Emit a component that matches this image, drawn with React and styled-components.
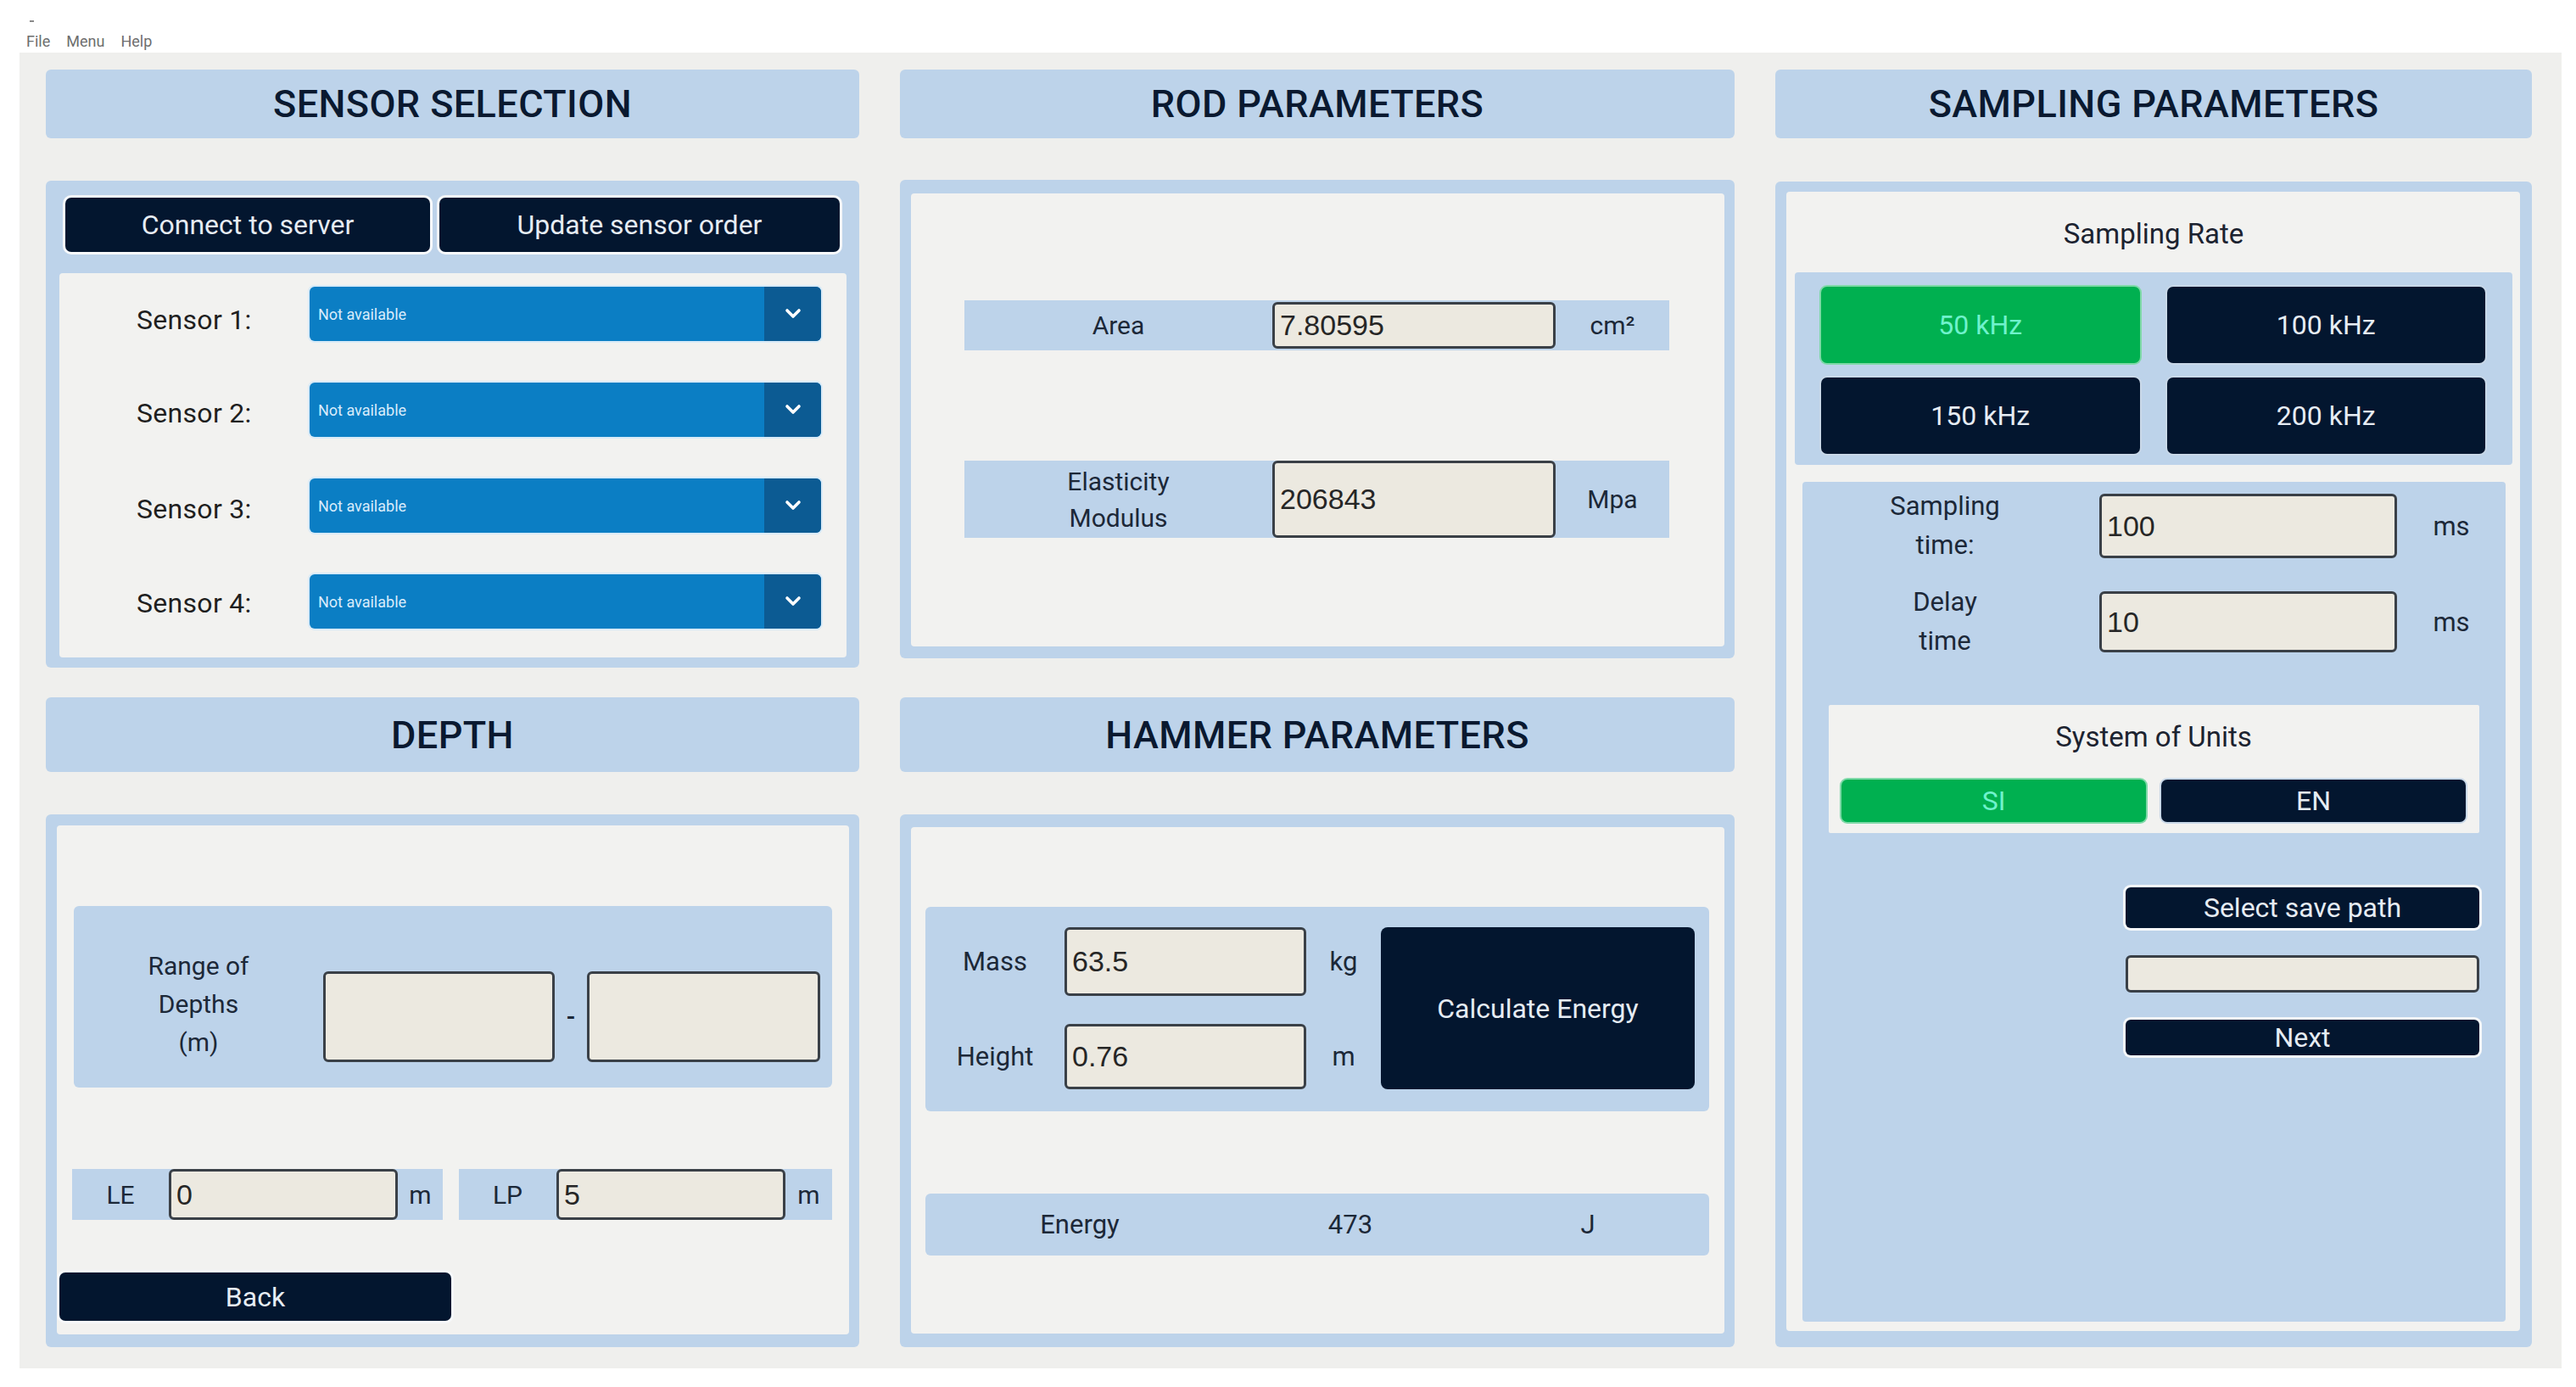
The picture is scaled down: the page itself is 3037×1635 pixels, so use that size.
import React from "react";
import styled, { createGlobalStyle } from "styled-components";

const GlobalStyle = createGlobalStyle`
  *, *::before, *::after { box-sizing: border-box; }
  html, body { margin: 0; padding: 0; background: #ffffff; }
  body { font-family: Roboto, "Liberation Sans", Arial, sans-serif; color: #1c2838; }
`;

const BLUE = "#bdd3ea";
const LIGHT = "#f2f2f0";
const NAVY = "#03162f";

const Page = styled.div`
  width: 3037px;
  height: 1635px;
  background: #ffffff;
`;

const MenuBar = styled.div`
  position: relative;
  height: 62px;
  display: flex;
  align-items: center;
  gap: 19px;
  padding: 34px 0 0 31px;
  font-size: 18px;
  color: #6e6e6e;
  &::before {
    content: "";
    position: absolute;
    left: 35px;
    top: 24px;
    width: 5px;
    height: 2px;
    background: #8a8a8a;
  }
`;

const Frame = styled.div`
  margin: 0 17px 0 23px;
  height: 1551px;
  background: #efefed;
  padding: 20px 34px 25px 31px;
  display: grid;
  grid-template-columns: 959px 984px 892px;
  column-gap: 48px;
`;

const Column = styled.div`
  display: flex;
  flex-direction: column;
  justify-content: space-between;
`;

const Section = styled.section`
  height: ${(p) => p.$h}px;
  display: flex;
  flex-direction: column;
  gap: ${(p) => p.$gap || 50}px;
`;

const Header = styled.div`
  height: ${(p) => p.$h || 81}px;
  flex: none;
  background: ${BLUE};
  border-radius: 6px;
  display: flex;
  align-items: center;
  justify-content: center;
  font-size: 45px;
  font-weight: 500;
  letter-spacing: 0.4px;
  color: #0a1930;
`;

const Panel = styled.div`
  flex: 1;
  background: ${BLUE};
  border-radius: 6px;
  padding: ${(p) => p.$pad};
  display: flex;
  flex-direction: column;
`;

const InnerBox = styled.div`
  flex: 1;
  background: ${LIGHT};
  border-radius: 4px;
  padding: ${(p) => p.$pad || "0"};
  display: flex;
  flex-direction: column;
  gap: ${(p) => p.$gap || 0}px;
`;

const DarkButton = styled.button`
  border: none;
  background: ${NAVY};
  color: #e6ecf3;
  border-radius: ${(p) => p.$r || 7}px;
  font-family: Roboto, "Liberation Sans", Arial, sans-serif;
  font-size: ${(p) => p.$fs || 32}px;
  height: ${(p) => (p.$h ? `${p.$h}px` : "auto")};
  padding: 0;
  box-shadow: 0 0 0 3px #f7f9fb;
  cursor: pointer;
`;

const ButtonRow = styled.div`
  display: grid;
  grid-template-columns: 430fr 472fr;
  gap: 11px;
  height: 64px;
  padding: 0 8px 0 7px;
  margin-bottom: 25px;
`;

const SensorRow = styled.div`
  display: grid;
  grid-template-columns: 295px 1fr;
  align-items: center;
  height: 64px;
`;

const SensorLabel = styled.span`
  padding: ${(p) => p.$dy || 0}px 0 0 91px;
  font-size: 32px;
  letter-spacing: 0.3px;
  color: #1f1f1f;
`;

const Dropdown = styled.div`
  height: 64px;
  display: flex;
  background: #0b7ec4;
  border-radius: 6px;
  overflow: hidden;
  box-shadow: 0 0 0 2px #d8eaf7;
`;

const DropText = styled.span`
  flex: 1;
  display: flex;
  align-items: center;
  padding-left: 10px;
  font-size: 18px;
  color: #d9ecfb;
`;

const DropArrow = styled.span`
  width: 67px;
  background: #0c5b93;
  display: flex;
  align-items: center;
  justify-content: center;
`;

const Field = styled.input`
  width: 100%;
  height: ${(p) => p.$h}px;
  background: #ece9e0;
  border: 3px solid #3a4047;
  border-radius: 6px;
  padding: 0 0 0 6px;
  font-family: "Liberation Sans", Arial, sans-serif;
  font-size: 34px;
  color: #262626;
  outline: none;
`;

const RangeBox = styled.div`
  height: 214px;
  margin-left: 2px;
  background: ${BLUE};
  border-radius: 6px;
  display: grid;
  grid-template-columns: 294px 273px 38px 275px;
  align-items: center;
  padding: 46px 15px 0 0;
`;

const RangeLabel = styled.div`
  text-align: center;
  font-size: 30px;
  line-height: 45px;
  margin-top: -30px;
`;

const Dash = styled.span`
  text-align: center;
  font-size: 28px;
  font-weight: 700;
`;

const LimitRow = styled.div`
  margin-top: 96px;
  display: grid;
  grid-template-columns: 437px 440px;
  gap: 19px;
  height: 60px;
`;

const LimitBox = styled.div`
  background: ${BLUE};
  display: grid;
  grid-template-columns: ${(p) => p.$lw}px 270px 1fr;
  align-items: center;
  font-size: 30px;
`;

const Center = styled.span`
  text-align: center;
`;

const BackButton = styled(DarkButton)`
  align-self: flex-start;
  margin: 62px 0 0 -15px;
  width: 462px;
`;

const ParamRow = styled.div`
  margin-top: ${(p) => p.$mt || 0}px;
  height: ${(p) => p.$h}px;
  background: ${BLUE};
  display: grid;
  grid-template-columns: 363px 334px 1fr;
  align-items: center;
  font-size: 30px;
`;

const ParamLabel = styled.span`
  text-align: center;
  line-height: 43px;
`;

const MassBox = styled.div`
  height: 241px;
  background: ${BLUE};
  border-radius: 6px;
  display: flex;
  padding: 24px 17px 26px 0;
`;

const MassGrid = styled.div`
  display: grid;
  grid-template-columns: 164px 285px 88px;
  grid-template-rows: 81px 77px;
  row-gap: 33px;
  align-items: center;
  font-size: 31px;
`;

const BigButton = styled(DarkButton)`
  flex: 1;
  height: 191px;
  box-shadow: none;
  border-radius: 8px;
`;

const EnergyRow = styled.div`
  margin-top: 97px;
  height: 73px;
  background: ${BLUE};
  border-radius: 6px;
  display: grid;
  grid-template-columns: 364px 274px 1fr;
  align-items: center;
  text-align: center;
  font-size: 31px;
`;

const BoxTitle = styled.div`
  height: ${(p) => p.$h}px;
  padding-top: ${(p) => p.$pt}px;
  text-align: center;
  font-size: 33px;
  line-height: 36px;
  color: #1c2330;
`;

const RateBox = styled.div`
  background: ${BLUE};
  border-radius: 4px;
  padding: 17px 32px 13px 31px;
  display: grid;
  grid-template-columns: 1fr 1fr;
  grid-auto-rows: 90px;
  gap: 17px 32px;
`;

const ToggleButton = styled.button`
  border: none;
  border-radius: 7px;
  background: ${(p) => (p.$active ? "#00b050" : NAVY)};
  color: ${(p) => (p.$active ? "#6ff2cc" : "#e6ecf3")};
  font-family: Roboto, "Liberation Sans", Arial, sans-serif;
  font-size: 32px;
  padding: 0;
  box-shadow: 0 0 0 2px ${(p) => (p.$active ? "#7fd9a8" : "#c9d8e8")};
`;

const LowerBox = styled.div`
  flex: 1;
  margin: 20px 8px 0 9px;
  background: ${BLUE};
  border-radius: 4px;
  display: flex;
  flex-direction: column;
`;

const TimeGrid = styled.div`
  margin-top: 14px;
  display: grid;
  grid-template-columns: 350px 351px 1fr;
  grid-template-rows: 76px 72px;
  row-gap: 39px;
  align-items: center;
  font-size: 31px;
`;

const TimeLabel = styled.span`
  text-align: center;
  padding-right: 14px;
  line-height: 46px;
`;

const SystemBox = styled.div`
  margin: 62px 31px 0 31px;
  height: 151px;
  background: ${LIGHT};
  border-radius: 2px;
  padding: 0 16px 13px 15px;
  display: flex;
  flex-direction: column;
`;

const UnitRow = styled.div`
  display: grid;
  grid-template-columns: 1fr 1fr;
  gap: 18px;
  height: 50px;
`;

const PathStack = styled.div`
  align-self: flex-end;
  margin: 64px 31px 0 0;
  width: 417px;
  display: flex;
  flex-direction: column;
  gap: 32px;
`;

const Chevron = () => (
  <svg width="22" height="14" viewBox="0 0 22 14">
    <polyline
      points="4,3 11,10 18,3"
      fill="none"
      stroke="#ffffff"
      strokeWidth="3.6"
      strokeLinecap="round"
      strokeLinejoin="round"
    />
  </svg>
);

const sensors = [
  { label: "Sensor 1:", dy: 14 },
  { label: "Sensor 2:", dy: 8 },
  { label: "Sensor 3:", dy: 8 },
  { label: "Sensor 4:", dy: 4 },
];

export default function App() {
  return (
    <Page>
      <GlobalStyle />
      <MenuBar>
        <span>File</span>
        <span>Menu</span>
        <span>Help</span>
      </MenuBar>
      <Frame>
        <Column>
          <Section $h={705}>
            <Header>SENSOR SELECTION</Header>
            <Panel $pad="20px 15px 12px 16px">
              <ButtonRow>
                <DarkButton>Connect to server</DarkButton>
                <DarkButton>Update sensor order</DarkButton>
              </ButtonRow>
              <InnerBox $pad="16px 30px 0 0" $gap={49}>
                {sensors.map((s) => (
                  <SensorRow key={s.label}>
                    <SensorLabel $dy={s.dy}>{s.label}</SensorLabel>
                    <Dropdown>
                      <DropText>Not available</DropText>
                      <DropArrow>
                        <Chevron />
                      </DropArrow>
                    </Dropdown>
                  </SensorRow>
                ))}
              </InnerBox>
            </Panel>
          </Section>
          <Section $h={766}>
            <Header $h={88}>DEPTH</Header>
            <Panel $pad="13px 12px 15px 13px">
              <InnerBox $pad="95px 20px 0 18px">
                <RangeBox>
                  <RangeLabel>
                    Range of
                    <br />
                    Depths
                    <br />
                    (m)
                  </RangeLabel>
                  <Field $h={107} readOnly value="" />
                  <Dash>-</Dash>
                  <Field $h={107} readOnly value="" />
                </RangeBox>
                <LimitRow>
                  <LimitBox $lw={114}>
                    <Center>LE</Center>
                    <Field $h={60} readOnly value="0" />
                    <Center>m</Center>
                  </LimitBox>
                  <LimitBox $lw={115}>
                    <Center>LP</Center>
                    <Field $h={60} readOnly value="5" />
                    <Center>m</Center>
                  </LimitBox>
                </LimitRow>
                <BackButton $h={57}>Back</BackButton>
              </InnerBox>
            </Panel>
          </Section>
        </Column>

        <Column>
          <Section $h={694} $gap={49}>
            <Header>ROD PARAMETERS</Header>
            <Panel $pad="16px 12px 14px 13px">
              <InnerBox $pad="126px 65px 0 63px">
                <ParamRow $h={59}>
                  <ParamLabel>Area</ParamLabel>
                  <Field $h={55} readOnly value="7.80595" />
                  <Center>cm²</Center>
                </ParamRow>
                <ParamRow $h={91} $mt={130}>
                  <ParamLabel>
                    Elasticity
                    <br />
                    Modulus
                  </ParamLabel>
                  <Field $h={91} readOnly value="206843" />
                  <Center>Mpa</Center>
                </ParamRow>
              </InnerBox>
            </Panel>
          </Section>
          <Section $h={766}>
            <Header $h={88}>HAMMER PARAMETERS</Header>
            <Panel $pad="15px 12px 16px 13px">
              <InnerBox $pad="94px 18px 0 17px">
                <MassBox>
                  <MassGrid>
                    <Center>Mass</Center>
                    <Field $h={81} readOnly value="63.5" />
                    <Center>kg</Center>
                    <Center>Height</Center>
                    <Field $h={77} readOnly value="0.76" />
                    <Center>m</Center>
                  </MassGrid>
                  <BigButton>Calculate Energy</BigButton>
                </MassBox>
                <EnergyRow>
                  <span>Energy</span>
                  <span>473</span>
                  <span>J</span>
                </EnergyRow>
              </InnerBox>
            </Panel>
          </Section>
        </Column>

        <Column>
          <Section $h={1506} $gap={51}>
            <Header>SAMPLING PARAMETERS</Header>
            <Panel $pad="12px 14px 19px 13px">
              <InnerBox $pad="0 9px 11px 10px">
                <BoxTitle $h={95} $pt={32}>
                  Sampling Rate
                </BoxTitle>
                <RateBox>
                  <ToggleButton $active>50 kHz</ToggleButton>
                  <ToggleButton>100 kHz</ToggleButton>
                  <ToggleButton>150 kHz</ToggleButton>
                  <ToggleButton>200 kHz</ToggleButton>
                </RateBox>
                <LowerBox>
                  <TimeGrid>
                    <TimeLabel>
                      Sampling
                      <br />
                      time:
                    </TimeLabel>
                    <Field $h={76} readOnly value="100" />
                    <Center>ms</Center>
                    <TimeLabel>
                      Delay
                      <br />
                      time
                    </TimeLabel>
                    <Field $h={72} readOnly value="10" />
                    <Center>ms</Center>
                  </TimeGrid>
                  <SystemBox>
                    <BoxTitle $h={88} $pt={20}>
                      System of Units
                    </BoxTitle>
                    <UnitRow>
                      <ToggleButton $active>SI</ToggleButton>
                      <ToggleButton>EN</ToggleButton>
                    </UnitRow>
                  </SystemBox>
                  <PathStack>
                    <DarkButton $h={48} $r={6}>
                      Select save path
                    </DarkButton>
                    <Field $h={44} readOnly value="" />
                    <DarkButton $h={42} $r={6}>
                      Next
                    </DarkButton>
                  </PathStack>
                </LowerBox>
              </InnerBox>
            </Panel>
          </Section>
        </Column>
      </Frame>
    </Page>
  );
}
